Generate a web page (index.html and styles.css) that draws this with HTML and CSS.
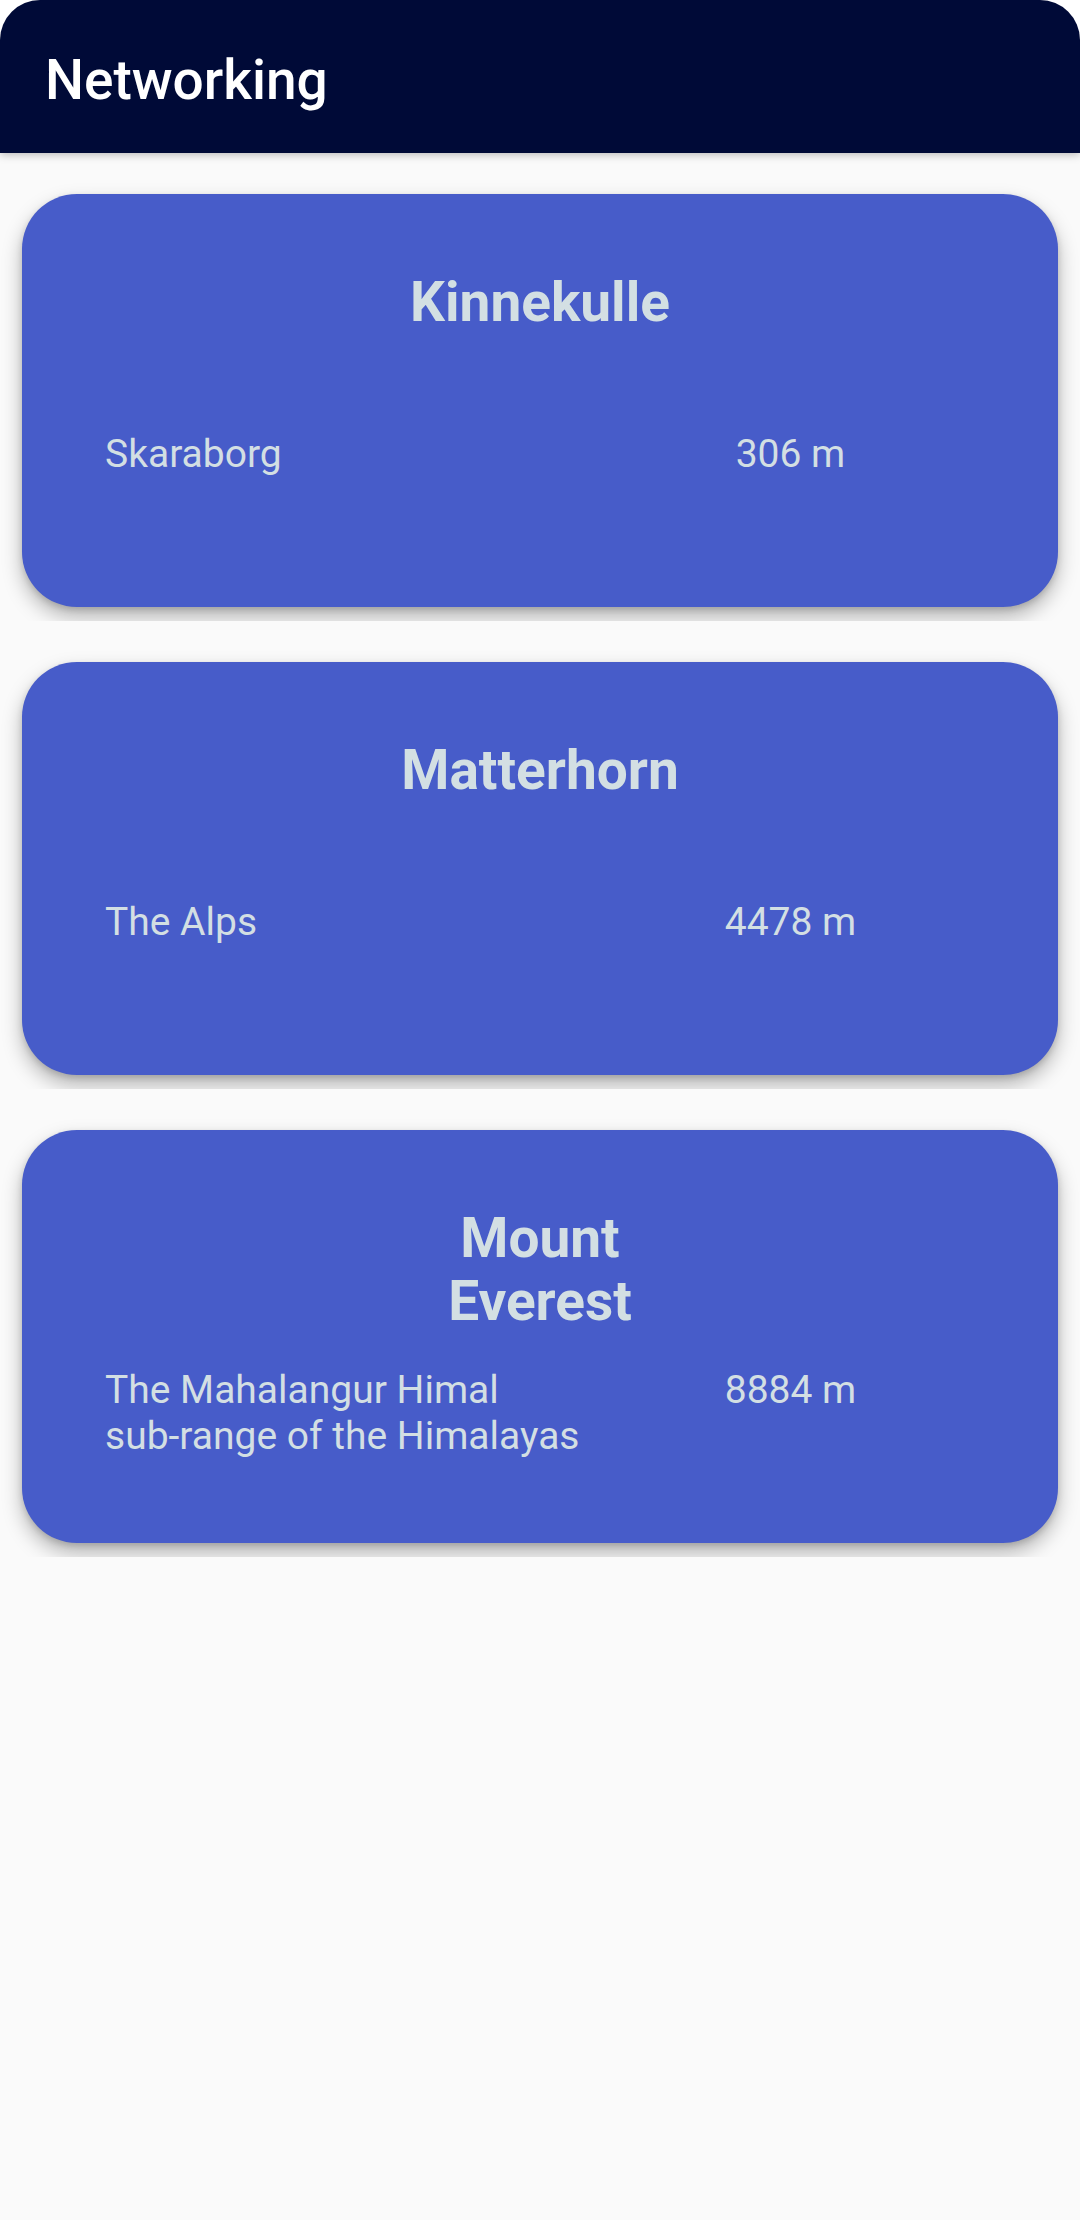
FILE: index.html
```html
<!DOCTYPE html>
<html>
<head>
<meta charset="utf-8">
<link rel="stylesheet" href="styles.css">
</head>
<body>
<div class="screen">
  <header class="appbar"><h1 class="appbar-title">Networking</h1></header>
  <main class="list">
    <div class="item">
      <div class="card">
        <div class="card-title">Kinnekulle</div>
        <div class="card-row">
          <div class="card-region">Skaraborg</div>
          <div class="card-height">306 m</div>
        </div>
      </div>
    </div>
    <div class="item">
      <div class="card">
        <div class="card-title">Matterhorn</div>
        <div class="card-row">
          <div class="card-region">The Alps</div>
          <div class="card-height">4478 m</div>
        </div>
      </div>
    </div>
    <div class="item">
      <div class="card">
        <div class="card-title">Mount<br>Everest</div>
        <div class="card-row">
          <div class="card-region">The Mahalangur Himal<br>sub-range of the Himalayas</div>
          <div class="card-height">8884 m</div>
        </div>
      </div>
    </div>
  </main>
</div>
</body>
</html>
```
FILE: styles.css
```css
html, body {
  margin: 0;
  padding: 0;
  background: #ffffff;
}
.screen {
  width: 1080px;
  height: 2220px;
  background: #fafafa;
  border-radius: 40px 40px 0 0;
  overflow: hidden;
  display: flex;
  flex-direction: column;
  font-family: Roboto, "Noto Sans", sans-serif;
}
.appbar {
  box-sizing: border-box;
  height: 153px;
  padding: 48px 45px 0;
  background: #000a37;
  box-shadow: 0 2px 8px rgba(0, 0, 0, 0.25);
  position: relative;
  z-index: 1;
  flex: none;
}
.appbar-title {
  margin: 0;
  font-size: 55px;
  font-weight: 500;
  color: #ffffff;
  line-height: normal;
}
.list {
  display: flex;
  flex-direction: column;
}
.item {
  padding: 41px 22px 14px;
  overflow: hidden;
}
.card {
  box-sizing: border-box;
  height: 413px;
  padding: 77px 57px 0 83px;
  background: #475cc9;
  border-radius: 55px;
  box-shadow: 0 10px 20px rgba(0, 0, 0, 0.28), 0 3px 6px rgba(0, 0, 0, 0.14);
  color: #d3dfe3;
}
.card-title {
  min-height: 126px;
  text-align: center;
  font-size: 55px;
  font-weight: 700;
  line-height: 63px;
  margin-left: -26px;
}
.card-row {
  margin-top: 34px;
  display: grid;
  grid-template-columns: 475px 1fr;
  font-size: 39px;
  line-height: 46px;
}
.card-height {
  text-align: center;
}
```
